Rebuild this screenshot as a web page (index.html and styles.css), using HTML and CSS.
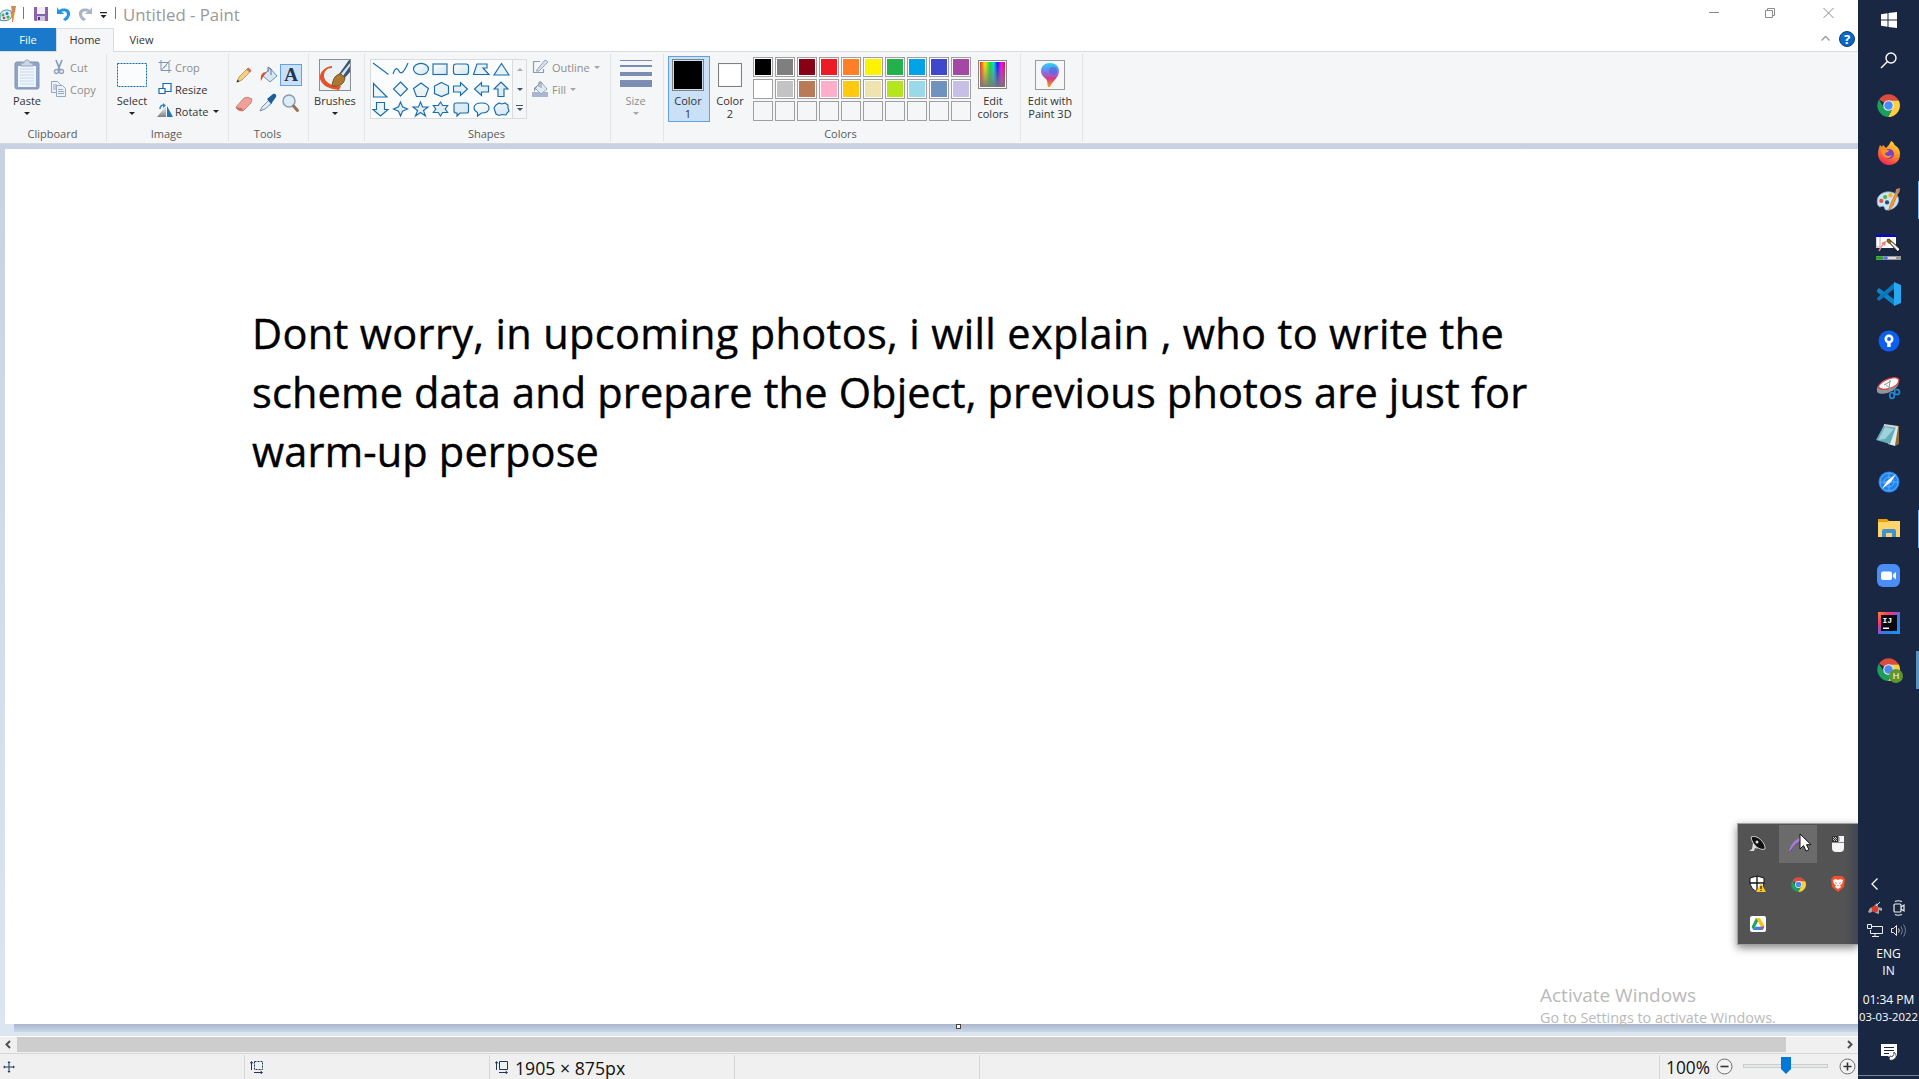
FILE: index.html
```html
<!DOCTYPE html>
<html lang="en">
<head>
<meta charset="utf-8">
<title>Untitled - Paint</title>
<link rel="stylesheet" href="styles.css">
</head>
<body>
<svg class="defs" width="0" height="0">
  <defs>
    <linearGradient id="pale" x1="0" y1="0" x2="1" y2="1"><stop offset="0" stop-color="#fff"/><stop offset="1" stop-color="#cfe6ee"/></linearGradient>
    <linearGradient id="rainbow"><stop offset="0" stop-color="#f22"/><stop offset=".2" stop-color="#fe0"/><stop offset=".4" stop-color="#1d3"/><stop offset=".55" stop-color="#0dd"/><stop offset=".7" stop-color="#11f"/><stop offset=".85" stop-color="#f0f"/><stop offset="1" stop-color="#f02"/></linearGradient>
    <linearGradient id="fade" x1="0" y1="0" x2="0" y2="1"><stop offset="0" stop-color="#888" stop-opacity="0"/><stop offset="1" stop-color="#777" stop-opacity=".95"/></linearGradient>
    <linearGradient id="balloon" x1="0" y1="0" x2="0" y2="1"><stop offset="0" stop-color="#1fd8ee"/><stop offset=".35" stop-color="#7a7cf2"/><stop offset=".65" stop-color="#d43a8c"/><stop offset="1" stop-color="#f9a20b"/></linearGradient>
    <linearGradient id="fox" x1=".8" y1="0" x2=".3" y2="1"><stop offset="0" stop-color="#ffe23a"/><stop offset=".5" stop-color="#ff8a22"/><stop offset="1" stop-color="#f5205e"/></linearGradient>
    <linearGradient id="idea" x1="0" y1="0" x2="1" y2="1"><stop offset="0" stop-color="#fc8a2a"/><stop offset=".3" stop-color="#f5317f"/><stop offset=".6" stop-color="#2c7bf0"/><stop offset="1" stop-color="#1497fb"/></linearGradient>
    <symbol id="chrome" viewBox="0 0 24 24">
      <path d="M12 12 2.200 5.700A12 12 0 0 1 22.800 6.800H12z" fill="#dd4b3e"/>
      <path d="M12 6.800h10.800A12 12 0 0 1 11.500 24l5-9.500z" fill="#fdcf41"/>
      <path d="M2 5.800 7.400 14.600 12 17.300h3.200L11.500 24A12 12 0 0 1 2 5.800z" fill="#1c9f5b"/>
      <circle cx="12" cy="12" r="5.500" fill="#f1f1f1"/><circle cx="12" cy="12" r="4.400" fill="#4a8af4"/>
    </symbol>
    <symbol id="palette" viewBox="0 0 26 26">
      <path d="M2 19C-1 11 5 5 13 5c8 0 12 6 10 11-2 6-8 8-12 8-3 0-1-4-4-4-2 0-3 2-5-1z" fill="#cfe4f2" stroke="#7eaec9" stroke-width=".8"/>
      <circle cx="5.500" cy="14.500" r="2.200" fill="#e25545"/><circle cx="9.500" cy="10.500" r="2.200" fill="#55b24a"/><circle cx="15" cy="8.500" r="2.300" fill="#f3b32b"/><circle cx="11.500" cy="16" r="2.200" fill="#1f4d75"/>
      <path d="M13 25 15 18 21 5l2 1-5 13z" fill="#f29a31" stroke="#c26a17" stroke-width=".6"/><path d="M20 6 21 2l4-1-.5 4-2 3z" fill="#b98c62"/>
    </symbol>
  </defs>
</svg>
<div class="desktop">
  <main class="window">
    <header class="titlebar">
      <svg class="app-icon" width="17" height="18" viewBox="0 0 17 18"><path d="M0 9C2 5 7 4 11 6l1 4c0 5-7 7-12 5z" fill="#d9edf5" stroke="#3a8fae"/><circle cx="3" cy="10" r="1.500" fill="#5a4"/><circle cx="7" cy="8.500" r="1.500" fill="#2b78c8"/><circle cx="4" cy="13" r="1.300" fill="#d44"/><circle cx="8" cy="12" r="1.500" fill="#4a4"/><path d="M12 6h3l-2 11h-1z" fill="#e88b2d"/><path d="M11 1h5l-1 6h-3z" fill="#c98a57"/></svg>
      <i class="tick"></i>
      <svg class="save" width="14" height="14" viewBox="0 0 14 14"><path d="M0 0h14v14H1L0 13z" fill="#8a63ae"/><path d="M3 0h8v7H3z" fill="#f1eef6"/><path d="M3 9h8v5H3z" fill="#cfc4de"/><path d="M4 10h2v3H4z" fill="#553480"/></svg>
      <svg class="undo" width="14" height="14" viewBox="0 0 14 14"><path d="M0 0v7h7L4.500 4.800C8 3 11 5 9.500 9L6 12.500 8.500 14C15 10 14.500 2 8 1.500 5 1.300 3 2 2 3z" fill="#2196e3"/></svg>
      <svg class="redo" width="14" height="14" viewBox="0 0 14 14"><path d="M14 0v7H7l2.500-2.200C6 3 3 5 4.500 9L8 12.500 5.500 14C-1 10-.5 2 6 1.500 9 1.300 11 2 12 3z" fill="#a9b4c6"/></svg>
      <svg class="qat" width="7" height="7" viewBox="0 0 7 7"><path d="M0 0h7v1.300H0zM.5 3h6L3.500 6.200z" fill="#222"/></svg>
      <i class="tick tick2"></i>
      <span class="title">Untitled - Paint</span>
      <svg class="winctl" width="126" height="12" viewBox="0 0 126 12" fill="none" stroke="#8b8b8b"><path d="M0 5.500h10M56.500 3.500h7v7h-7zM58.500 3.500v-2h7v7h-2M114.500 1l10 10M124.500 1l-10 10"/></svg>
    </header>
    <nav class="tabs">
      <span class="tab file">File</span><span class="tab home">Home</span><span class="tab view">View</span>
      <span class="help"><svg width="34" height="16" viewBox="0 0 34 16"><path d="M.5 9.500 4.500 5.500l4 4" fill="none" stroke="#999" stroke-width="1.300"/><circle cx="26" cy="8" r="7.500" fill="#0869c8" stroke="#12406c"/></svg><b>?</b></span>
    </nav>
    <section class="ribbon">
      <div class="group clipboard">
        <div class="tools-row">
          <div class="big paste"><svg width="26" height="32" viewBox="0 0 26 32"><rect x="1" y="3" width="24" height="27" rx="2" fill="#8ea3c5" stroke="#8294b5"/><path d="M4 7h18v21H4z" fill="#eff5fc"/><path d="M6 10h14M6 13h14M6 16h14M6 19h14M6 22h14M6 25h14" stroke="#cbd8e8"/><path d="M7 7V4h3c0-4 6-4 6 0h3v3z" fill="#ccd7e6" stroke="#93a4be"/></svg><span>Paste</span><i class="caret"></i></div>
          <div class="list dim">
            <p><svg width="16" height="16" viewBox="0 0 16 16" fill="none"><path d="M5 1l4 10M11 1 7 11" stroke="#8a9cbd" stroke-width="1.700"/><circle cx="5.500" cy="12.500" r="2" stroke="#94a3bd" stroke-width="1.400"/><circle cx="10.500" cy="12.500" r="2" stroke="#94a3bd" stroke-width="1.400"/></svg>Cut</p>
            <p><svg width="16" height="16" viewBox="0 0 16 16" fill="#eef2f9" stroke="#97a7c2"><path d="M.5.5h6l3 3v8h-9z"/><path d="M2 4h4M2 6h4M2 8h4"/><path d="M5.500 4.500h6l3 3v8h-9z"/><path d="M7 8.500h5M7 10.500h6M7 12.500h6"/></svg>Copy</p>
          </div>
        </div>
        <h2>Clipboard</h2>
      </div>
      <div class="group image">
        <div class="tools-row">
          <div class="big"><svg width="32" height="32" viewBox="0 0 32 32"><rect x="1.500" y="4.500" width="29" height="23" fill="#fafcfe" stroke="#1369ac" stroke-dasharray="2 1"/></svg><span>Select</span><i class="caret"></i></div>
          <div class="list">
            <p class="dim"><svg width="16" height="16" viewBox="0 0 16 16" fill="none" stroke="#8292ae"><path d="M3.500 1v10.500H14M1 3.500h10.500V14M4 11 13 1M6 9l3-3" /></svg>Crop</p>
            <p><svg width="16" height="16" viewBox="0 0 16 16" fill="#fff" stroke="#1c69a9"><path d="M5.500 2.500h8v8h-8z" stroke-width="1.200"/><path d="M1.500 7.500h6v5h-6z" stroke-width="1.200"/></svg>Resize</p>
            <p><svg width="17" height="16" viewBox="0 0 17 16"><path d="M9 3v11H0z" fill="url(#fade)"/><path d="M10 3v11h6z" fill="#1c7bb7"/><path d="M3 6c0-3 2-4 4-4" fill="none" stroke="#2a88d4" stroke-width="1.500"/><path d="M6 0l3 2.500L6 5z" fill="#2a88d4"/></svg>Rotate<i class="caret side"></i></p>
          </div>
        </div>
        <h2>Image</h2>
      </div>
      <div class="group tools">
        <div class="tool-grid">
          <svg viewBox="0 0 22 22"><path d="M4 18l2-5L15 4l3 3-9 9z" fill="#f3cf85" stroke="#a9823b" stroke-width=".7"/><path d="M13.500 5.500 15.500 3.500l3 3-2 2z" fill="#d66a60"/><path d="M3.500 18.500l1-3 2 2z" fill="#333"/></svg>
          <svg viewBox="0 0 22 22"><path d="M6 12 13 4l7 8-7 6z" fill="#d5e7f3" stroke="#6f91b1"/><path d="M11 8V3l3 2v6" fill="none" stroke="#5e7794"/><path d="M4 17c-1-6 1-9 6-9l-3 3z" fill="#e24b26"/></svg>
          <span class="letter">A</span>
          <svg viewBox="0 0 22 22"><path d="M3 15 11 6q4-2 8 1l-1 4-8 8q-4 0-6-2z" fill="#f1a098" stroke="#b96a62" stroke-width=".7"/><path d="M3 15q3 1 6 1l1 3q-4 0-6-2z" fill="#c96c65"/></svg>
          <svg viewBox="0 0 22 22"><path d="M3 19l2-4 7-7 3 3-7 6z" fill="#dcebf5" stroke="#7891a8"/><path d="M10 7l6-5c2-1 4 1 3 3l-5 7z" fill="#1d5d9b"/></svg>
          <svg viewBox="0 0 22 22"><circle cx="9" cy="9" r="6" fill="#dcecf8" stroke="#8d9cab" stroke-width="1.500"/><path d="M13.500 14l4 4.500" stroke="#986f58" stroke-width="3" stroke-linecap="round"/></svg>
        </div>
        <h2>Tools</h2>
      </div>
      <div class="group brushes">
        <div class="big"><svg width="32" height="32" viewBox="0 0 32 32"><rect x=".5" y=".5" width="31" height="31" fill="#eaf2f5" stroke="#8b8f93"/><path d="M13 7C5 8 0 14 1 20c2 6 8 9 13 10l6 1 2-4c-9 1-17-4-17-10 0-5 3-8 8-8z" fill="#e6512a"/><path d="M20 15 30 1h1v12l-7 8z" fill="#3c5574"/><path d="M22 15 31 4v3l-7 10z" fill="#d8e4ef"/><path d="M13 27c1-8 4-12 9-12l4 4c-1 6-5 9-13 8z" fill="#ab7733" stroke="#805220"/></svg><span>Brushes</span><i class="caret"></i></div>
      </div>
      <div class="group shapes">
        <div class="tools-row">
          <div class="gallery">
            <svg class="shape-set" width="142" height="58" viewBox="0 0 142 58" fill="url(#pale)" stroke="#1d6bab" stroke-width="1.150">
              <g fill="none"><path d="M3 3 18.500 14.500"/><path d="M23 14q3-9 6-3t9-8"/></g>
              <ellipse cx="51" cy="9" rx="7.500" ry="5.700"/><rect x="63" y="4" width="14" height="10.500"/><rect x="83.500" y="4" width="15" height="10.500" rx="2.500"/>
              <path d="M107 4h10v4h-4l6 6.500h-15.500zM131.500 3.500l7.500 11.500h-15zM3.500 23.500V37h13.500zM30.500 22l7 7-7 7-7-7zM51 23l7.500 5.500-3 8h-9l-3-8zM71.500 22.500l7 3.500v7.500l-7 3-7-3V26zM83.500 26h7v-3.500l7 6.500-7 6.500V32h-7zM118.500 26h-7v-3.500l-7 6.500 7 6.500V32h7zM128 36.500V29h-4l7-7 7 7h-4v7.500zM6.500 42.500h8v7h3.500l-7.500 6.500-7.500-6.500h3.500zM30.500 42l2 4.800 5 2.200-5 2.200-2 4.800-2-4.800-5-2.200 5-2.200zM50.500 42l2 5h5.500l-4.500 3.500 2 5.500-5-3.500-5 3.500 2-5.500-4.500-3.500h5.500zM70.500 42l2.200 3.500h5l-2.500 3.500 2.500 3.500h-5l-2.200 3.500-2.200-3.500h-5l2.500-3.500-2.500-3.500h5zM86 43h10.500q2 0 2 2v6q0 2-2 2H90l-3 3v-3h-1q-2 0-2-2v-6q0-2 2-2z"/>
              <path d="M111.500 43q7.500 0 7.500 5t-7.500 5l-4 3v-3.500q-3.500-2-3.500-4.500 0-5 7.500-5zM126 45l3-2 3 1 3-1 3 2v3l1 3-2 2-1 2-4-.5-3 1-3-1.500-1-3-1-3z"/>
            </svg>
            <div class="spin"><i class="up"></i><i class="caret"></i><i class="caret bar"></i></div>
          </div>
          <div class="list dim">
            <p><svg width="17" height="16" viewBox="0 0 17 16" fill="none"><path d="M8 2.500H1.500v11h10V10" stroke="#8a9bb8" stroke-width="1.200"/><path d="M4 12 13 1l3 2L7 12z" fill="#d9e0ec" stroke="#97a5be"/></svg>Outline<i class="caret side"></i></p>
            <p><svg width="17" height="16" viewBox="0 0 17 16"><path d="M0 11h16v5H0z" fill="#a8b7cf"/><path d="M3 7 9 1l6 7-6 5z" fill="#e3e9f1" stroke="#97a5be"/><path d="M7 6V1h2v6" fill="none" stroke="#8191aa"/><path d="M2 11V7l4-3z" fill="#8495b2"/></svg>Fill<i class="caret side"></i></p>
          </div>
        </div>
        <h2>Shapes</h2>
      </div>
      <div class="group size dim">
        <div class="big"><div class="weights"><i></i><i></i><i></i><i></i></div><span>Size</span><i class="caret"></i></div>
      </div>
      <div class="group colors">
        <div class="color-row">
          <div class="color-btn active"><i class="chip black"></i><span>Color<br>1</span></div>
          <div class="color-btn second"><i class="chip white"></i><span>Color<br>2</span></div>
          <div class="swatches">
            <i class="c0"></i><i class="c1"></i><i class="c2"></i><i class="c3"></i><i class="c4"></i><i class="c5"></i><i class="c6"></i><i class="c7"></i><i class="c8"></i><i class="c9"></i>
            <i class="d0"></i><i class="d1"></i><i class="d2"></i><i class="d3"></i><i class="d4"></i><i class="d5"></i><i class="d6"></i><i class="d7"></i><i class="d8"></i><i class="d9"></i>
            <i class="e"></i><i class="e"></i><i class="e"></i><i class="e"></i><i class="e"></i><i class="e"></i><i class="e"></i><i class="e"></i><i class="e"></i><i class="e"></i>
          </div>
          <div class="edit"><svg width="30" height="30" viewBox="0 0 30 30"><rect x=".5" y=".5" width="28" height="28" fill="#fff" stroke="#888"/><rect x="2" y="2" width="25" height="25" fill="url(#rainbow)"/><rect x="2" y="2" width="25" height="25" fill="url(#fade)"/></svg><span>Edit<br>colors</span></div>
        </div>
        <h2>Colors</h2>
      </div>
      <div class="group paint3d">
        <div class="edit"><svg width="30" height="30" viewBox="0 0 30 30"><rect x=".5" y=".5" width="29" height="29" fill="#f7f7f7" stroke="#9a9a9a"/><path d="M15 3c6 0 9 4 9 8 0 7-7 10-9 16h-2c-1-4 0-5-2-8-2-2-5-4-5-8 0-5 4-8 9-8z" fill="url(#balloon)"/><circle cx="18" cy="11" r="4" fill="#5263dc" opacity=".6"/></svg><span>Edit with<br>Paint 3D</span></div>
      </div>
    </section>
    <section class="workspace">
      <div class="canvas"><p class="t1">Dont worry, in upcoming photos, i will explain , who to write the</p><p class="t2">scheme data and prepare the Object, previous photos are just for</p><p class="t3">warm-up perpose</p></div>
      <div class="shadow"><i class="handle"></i></div>
    </section>
    <div class="scrollbar"><svg width="17" height="15" viewBox="0 0 17 15"><path d="M10 4 6.500 7.500 10 11" fill="none" stroke="#505050" stroke-width="2"/></svg><i class="thumb"></i><svg width="17" height="15" viewBox="0 0 17 15"><path d="M7 4l3.500 3.500L7 11" fill="none" stroke="#505050" stroke-width="2"/></svg></div>
    <footer class="status">
      <div class="cell first"><svg width="12" height="12" viewBox="0 0 12 12" stroke="#1e395b" fill="#1e395b"><path d="M6 1v10M1 6h10" /><path d="M6 0l1.500 2h-3zM6 12l1.500-2h-3zM0 6l2-1.500v3zM12 6l-2-1.500v3z" stroke="none"/></svg></div>
      <div class="cell"><svg width="14" height="14" viewBox="0 0 14 14" fill="none" stroke="#1e395b"><path d="M1.500 2v8M0 3.500l1.500-2 1.500 2M4 12.500h8M10.500 11l2 1.500-2 1.500"/><path d="M4.500 1.500h8v8h-8z" stroke-dasharray="2 1"/></svg></div>
      <div class="cell"><svg width="14" height="14" viewBox="0 0 14 14" fill="none" stroke="#1e395b"><path d="M1.500 2v8M0 3.500l1.500-2 1.500 2M4 12.500h8M10.500 11l2 1.500-2 1.500M4.500 1.500h8v8h-8z"/></svg><span class="dims">1905 × 875px</span></div>
      <div class="cell"></div>
      <div class="cell wide"></div>
      <div class="zoom"><span>100%</span>
        <svg width="17" height="17" viewBox="0 0 17 17"><circle cx="8.500" cy="8.500" r="7.500" fill="#f3f3f3" stroke="#6e6e6e"/><path d="M4.500 8.500h8" stroke="#333" stroke-width="1.600"/></svg>
        <div class="track"><svg width="10" height="17" viewBox="0 0 10 17"><path d="M0 0h10v12l-5 5-5-5z" fill="#0078d7"/></svg></div>
        <svg width="17" height="17" viewBox="0 0 17 17"><circle cx="8.500" cy="8.500" r="7.500" fill="#f3f3f3" stroke="#6e6e6e"/><path d="M4.500 8.500h8M8.500 4.500v8" stroke="#333" stroke-width="1.600"/></svg>
      </div>
    </footer>
    <div class="watermark"><b>Activate Windows</b><span>Go to Settings to activate Windows.</span></div>
    <aside class="tray-popup">
      <span><svg width="18" height="18" viewBox="0 0 18 18"><path d="M2 2C8-1 17 8 16 14c-5 2-13-4-14-12z" fill="#111" stroke="#ccc"/><path d="M4 8 9 14 6 13 5 16H0l3-2z" fill="#ddd"/><circle cx="8" cy="7" r="1.500" fill="#ddd"/></svg></span>
      <span class="hover"><svg width="18" height="18" viewBox="0 0 18 18"><path d="M0 16C2 8 8 3 15 1l-3 5-5 3-4 6z" fill="#a77bd0"/><path d="M2 16C5 10 9 7 16 5" stroke="#63428c" fill="none"/></svg></span>
      <span><svg width="16" height="18" viewBox="0 0 16 18"><path d="M2 1h12v12q0 4-4 4H6q-4 0-4-4z" fill="#f5f5f5"/><path d="M2 1h6v6H2z" fill="#333"/><path d="M3 2h1v1H3zM5 2h1v1H5zM4 3h1v1H4zM6 3h1v1H6zM3 4h1v1H3zM5 4h1v1H5zM4 5h1v1H4zM6 5h1v1H6zM9 2h1v4H9z" fill="#bbb"/><path d="M2 7.500h12M8.500 1v6" stroke="#888" fill="none"/></svg></span>
      <span><svg width="18" height="18" viewBox="0 0 18 18"><path d="M8 1l7 2v6q-1 5-7 8-6-3-7-8V3z" fill="#fff" stroke="#111"/><path d="M8 1v16M1 8h14" stroke="#111" stroke-width="1.300"/><path d="M12 8l5 9H7z" fill="#ffc421"/><path d="M12 11v3M12 15v1" stroke="#222" stroke-width="1.300"/></svg></span>
      <span><svg width="15" height="15"><use href="#chrome"/></svg></span>
      <span><svg width="14" height="16" viewBox="0 0 14 16"><path d="M3 0h8l3 3-1 8-6 5-6-5L0 3z" fill="#f3502b"/><path d="M2 4l3-1 2 1 2-1 3 1-1 4-2 1 1 2-3 2-3-2 1-2-2-1z" fill="#fff"/><path d="M4 6l2 1-1 1zM10 6 8 7l1 1zM6 9h2l-1 1z" fill="#f3502b"/></svg></span>
      <span><svg width="16" height="16" viewBox="0 0 16 16"><rect width="16" height="16" rx="2" fill="#fff"/><path d="M6 2h4L5 11l-1.500 3L1.500 11z" fill="#1fa463"/><path d="M6 2h4l4.500 8h-4z" fill="#fbc016"/><path d="M5 10.500h9.500l-2 3.500h-9z" fill="#3f7fea"/><path d="M11 10.500h3.500l-2 3.500z" fill="#e8453a"/><path d="M8 6l2.500 4.500h-5z" fill="#fff"/></svg></span>
    </aside>
    <svg class="cursor" width="14" height="20" viewBox="0 0 14 20"><path d="M1 1v15l3.500-3.500L7 18l3-1.300-2.500-5H12z" fill="#fff" stroke="#111"/></svg>
  </main>
  <aside class="taskbar">
    <div class="slot top"><svg width="16" height="16" viewBox="0 0 16 16"><path d="M0 2.300 6.500 1.300V7.500H0zM7.500 1.100 16 0v7.500H7.500zM0 8.500h6.500v6.200L0 13.700zM7.500 8.500H16V16l-8.500-1.100z" fill="#fff"/></svg></div>
    <div class="slot top"><svg width="17" height="17" viewBox="0 0 17 17" fill="none" stroke="#fff" stroke-width="1.400"><circle cx="11" cy="6" r="5"/><path d="M7.500 9.500 1 16"/></svg></div>
    <div class="apps">
      <div class="slot"><svg width="23" height="23"><use href="#chrome"/></svg></div>
      <div class="slot"><svg width="24" height="24" viewBox="0 0 24 24"><path d="M1 13C1 9 2 7 3 4l2 2 1-2 3 3c2-2 4-4 5-7 2 1 3 2 3.500 4L19 5c3 2 4 5 4 8 0 7-5 11-11 11S1 19 1 13z" fill="url(#fox)"/><circle cx="12" cy="13" r="5" fill="#7542c8"/><path d="M4 9h8l-1 2-3 1c0 3 3 4 7 2-2 5-10 4-11-5z" fill="#ff922a"/></svg></div>
      <div class="slot open"><svg width="25" height="25"><use href="#palette"/></svg></div>
      <div class="slot"><svg width="25" height="26" viewBox="0 0 25 26"><path d="M0 1h20v13H0z" fill="#fff"/><path d="M0 1h20v2H0z" fill="#00e"/><path d="M0 3v10h4V3" fill="none" stroke="#aaa"/><path d="M3 17 8 8" stroke="#f88" stroke-width="1.500"/><path d="M5 9l5-2-1 5z" fill="#f77"/><path d="M11 6l2-1 11 10-2 3z" fill="#eee" stroke="#111"/><path d="M10 7l3-2 3 3-3 2z" fill="#8a6419"/><path d="M0 22h25v4H0z" fill="#999"/><path d="M0 22.500h7v3H0z" fill="#1fa51f"/><path d="M8 22.500h3v3H8z" fill="#66e"/><path d="M12 23h8v2h-8z" fill="#ddd"/></svg></div>
      <div class="slot"><svg width="24" height="24" viewBox="0 0 24 24"><path d="M0 8l2-2 16 12v6L0 10z" fill="#0c83c9"/><path d="M0 16 18 0v6L2 19l-2-2z" fill="#0a77bb"/><path d="M17 0l7 3v18l-7 3z" fill="#29a8f2"/></svg></div>
      <div class="slot"><svg width="22" height="22" viewBox="0 0 22 22"><circle cx="11" cy="11" r="10.500" fill="#0d5ff0"/><circle cx="11" cy="9" r="3.200" fill="none" stroke="#fff" stroke-width="2.600"/><path d="M9.200 12h3.500v5H9.200z" fill="#fff"/></svg></div>
      <div class="slot"><svg width="25" height="24" viewBox="0 0 25 24"><path d="M1 12c4-8 20-12 22-6-1 9-17 15-22 10z" fill="#8f969b"/><path d="M2 11C6 3 21-1 23 4 22 12 6 16 2 11z" fill="#fff" stroke="#d34242" stroke-width="1.300"/><path d="M9 8l7 6M14 4l-1 9M8 9l7-4" stroke="#999"/><g fill="none" stroke="#2189d2" stroke-width="1.700"><circle cx="21" cy="16" r="2.500"/><ellipse cx="16" cy="19.500" rx="2.200" ry="3"/></g></svg></div>
      <div class="slot"><svg width="25" height="24" viewBox="0 0 25 24"><path d="M21 3h2v18l-4 2z" fill="#8d6b35"/><path d="M9 2l13 2-3 19-7-2z" fill="#dfeceb"/><path d="M8 2l12 2-6 17L0 17z" fill="#62adb8"/><path d="M9 4l9 2-9 10-7 1z" fill="#9ed2d8"/><path d="M8 2l14 2" stroke="#d5d5d5" stroke-width="2"/></svg></div>
      <div class="slot"><svg width="22" height="22" viewBox="0 0 22 22"><circle cx="11" cy="11" r="10.500" fill="#2084ef"/><g fill="none" stroke="#7ab9f7" stroke-width=".7"><circle cx="11" cy="11" r="9"/><circle cx="11" cy="11" r="5"/><path d="M11 2v18M2 11h18"/></g><path d="M4 18l5-8 9-7-5 8z" fill="#fff"/></svg></div>
      <div class="slot open"><svg width="22" height="19" viewBox="0 0 22 19"><path d="M0 0h9l2 2h11v16H0z" fill="#e8a203"/><path d="M0 3h9l2-1h11v16H0z" fill="#ffd469"/><path d="M4 18v-6q0-2 2-2h10q2 0 2 2v6h-4v-4H8v4z" fill="#3d91d6"/></svg></div>
      <div class="slot"><svg width="23" height="23" viewBox="0 0 23 23"><rect width="23" height="23" rx="6" fill="#4a8df7"/><rect x="4" y="7.500" width="11" height="8.500" rx="2" fill="#fff"/><path d="M16 10.500 19 8v7.500l-3-2.500z" fill="#fff"/></svg></div>
      <div class="slot"><div class="idea"><svg width="22" height="22" viewBox="0 0 22 22"><path d="M0 0h22v22H0z" fill="url(#idea)"/><path d="M3 3h16v16H3z" fill="#0a0610"/><path d="M5 15.500h6V17H5z" fill="#fff"/></svg><b>IJ</b></div></div>
      <div class="slot current"><div class="profile"><svg width="23" height="23"><use href="#chrome"/></svg><b>H</b></div></div>
    </div>
    <div class="tray">
      <svg width="7" height="12" viewBox="0 0 7 12"><path d="M6.500.5 1 6l5.500 5.500" fill="none" stroke="#fff" stroke-width="1.300"/></svg>
      <div class="pair"><svg width="15" height="14" viewBox="0 0 15 14"><path d="M0 11l2-4 3-1 4-4 1 4 4 1v3l-3-1 0 4-3-1-3-2-3 2z" fill="#a9a9a9"/><circle cx="7" cy="8" r="3.200" fill="#d83b2a"/><path d="M8 5l4-4" stroke="#ddd"/></svg><svg width="12" height="16" viewBox="0 0 12 16" fill="none" stroke="#eee" stroke-width="1.200"><rect x="1" y="4" width="7" height="8" rx="1"/><path d="M8 7l3-2v6L8 9M2 1.500q3-1.500 7 0M2 14.500q3 1.500 7 0"/></svg></div>
      <div class="pair"><svg width="16" height="14" viewBox="0 0 16 14" fill="none" stroke="#eee"><path d="M5 2.500h10.500v7H3.500V6M8 10v3M5 12.500h7"/><path d="M.5.500h4v4h-4z"/></svg><svg width="16" height="13" viewBox="0 0 16 13" fill="none" stroke="#eee"><path d="M.5 4.500h2l3-3v10l-3-3h-2z"/><path d="M7.500 4.500q1.500 2 0 4"/><path d="M10 2.500q3 4 0 8M12.500.5q4 6 0 12" stroke="#76829a"/></svg></div>
      <p class="lang">ENG<br>IN</p>
      <p class="clock"><span class="time">01:34 PM</span><br><span class="date">03-03-2022</span></p>
      <svg class="notes" width="17" height="17" viewBox="0 0 17 17"><path d="M0 0h16v12h-5v4l-4-4H0z" fill="#fff"/><path d="M3 3.500h10M3 6.500h10M3 9.500h5" stroke="#1a2742"/><path d="M9 12q4 2 4-4 5 5-1 8-3 1-4-1z" fill="#fff" stroke="#1a2742" stroke-width=".8"/></svg>
    </div>
    <i class="show-desktop"></i>
  </aside>
</div>
</body>
</html>
```

FILE: styles.css
```css
* { box-sizing: border-box; }
body, p, h2 { margin: 0; }
body { width: 1919px; height: 1079px; overflow: hidden; font-family: "Open Sans", "Noto Sans", sans-serif; font-size: 11px; color: #333; }
svg { display: block; flex: none; }
i { display: block; font-style: normal; }
.defs { position: absolute; }
.desktop { display: flex; width: 1919px; height: 1079px; }
.window { position: relative; width: 1858px; height: 1079px; display: flex; flex-direction: column; overflow: hidden; background: #fff; }

.titlebar { height: 28px; display: flex; align-items: center; flex: none; }
.app-icon { margin: -1px -1px 0 0; }
.tick { width: 1px; height: 12px; background: #777; margin: -2px 0 0 7px; }
.save { margin-left: 10px; }
.undo { margin-left: 9px; }
.redo { margin-left: 7px; }
.qat { margin: 3px 0 0 8px; }
.tick2 { margin-left: 8px; }
.title { margin-left: 7px; font-size: 16.800px; line-height: 28px; padding-top: 1px; color: #999; white-space: nowrap; }
.winctl { margin: -2px 23px 0 auto; }

.tabs { height: 23px; display: flex; flex: none; line-height: 23px; }
.tab { text-align: center; }
.file { width: 56px; background: #1979ca; color: #fff; }
.home { width: 58px; height: 24px; background: #f5f6f7; border: 1px solid #dadbdc; border-bottom: 0; line-height: 22px; z-index: 1; }
.view { width: 55px; }
.help { margin: 3px 3px 0 auto; display: grid; }
.help > * { grid-area: 1 / 1; }
.help b { justify-self: end; width: 16px; text-align: center; font-size: 13px; line-height: 16px; color: #fff; }

.ribbon { height: 93px; flex: none; display: flex; background: #f5f6f7; border-top: 1px solid #dadbdc; border-bottom: 1px solid #d4d7dc; padding: 2px 0 3px; line-height: 13px; }
.group { display: flex; flex-direction: column; border-right: 1px solid #e2e3e4; height: 87px; padding-top: 5px; flex: none; }
.group h2 { font-size: 11px; font-weight: 400; line-height: 14px; text-align: center; color: #5a5a5a; margin-top: auto; }
.tools-row { display: flex; }
.big { display: flex; flex-direction: column; align-items: center; }
.big span { margin-top: 3px; }
.caret { width: 0; height: 0; border: 3px solid transparent; border-top-color: #222; border-bottom: 0; }
.big .caret { margin-top: 5px; }
.list { display: flex; flex-direction: column; margin-top: -2px; }
.list p { display: flex; align-items: center; height: 22px; margin-top: -1px; margin-bottom: 1px; white-space: nowrap; }
.list svg { margin-right: 3px; }
.caret.side { margin-left: 4px; }
.dim { color: #8d8d8d; }
.dim .caret { border-top-color: #a5a5a5; }
.clipboard { width: 107px; }
.clipboard .big { width: 42px; margin-left: 6px; }
.clipboard .list { margin-left: 3px; }
.clipboard h2 { padding-right: 1px; }
.image { width: 122px; }
.image .big { width: 38px; margin-left: 6px; }
.image .list { margin-left: 6px; }
.image .list svg { width: 17px; margin-right: 1px; }
.image h2 { padding-right: 2px; }
.tools { width: 80px; }
.tools h2 { padding-right: 2px; }
.tool-grid { display: grid; grid-template-columns: 22px 22px 22px; gap: 6px 1.500px; padding: 5px 0 0 4px; }
.tool-grid svg { width: 22px; height: 22px; }
.letter { border: 1px solid #62a2e4; background: #c9e0f7; font: bold 19px/20px "Liberation Serif", serif; text-align: center; color: #1e3350; }
.brushes { width: 56px; }
.brushes .big { margin-right: 3px; }
.shapes { width: 246px; }
.shapes h2 { padding-right: 2px; }
.gallery { display: flex; width: 157px; height: 60px; margin-left: 5px; border: 1px solid #dadbdc; background: #fafcfe; }
.shape-set { margin-left: -1px; }
.spin { width: 14px; margin-left: auto; border-left: 1px solid #dadbdc; display: flex; flex-direction: column; align-items: center; background: #f5f6f7; }
.spin .up { border: 3px solid transparent; border-bottom-color: #aaa; border-top: 0; margin: 8px 0 17px; }
.spin .caret { border-top-color: #44546a; }
.spin .bar { margin-top: 17px; position: relative; }
.bar::before { content: ""; position: absolute; left: -4px; top: -6px; width: 7px; height: 1px; background: #44546a; }
.shapes .list { margin-left: 5px; }
.shapes .list svg { margin-right: 3px; }
.size { width: 53px; }
.size .big { margin-right: 3px; }
.weights { width: 32px; height: 32px; padding-top: 1px; }
.weights i { background: #7b8db0; height: 1px; margin-bottom: 4px; }
.weights i:nth-child(2) { height: 2px; margin-bottom: 5px; }
.weights i:nth-child(3) { height: 4px; }
.weights i:nth-child(4) { height: 7px; }
.colors { width: 357px; padding-top: 2px; }
.colors h2 { padding-right: 3px; }
.color-row { display: flex; }
.color-btn { width: 42px; height: 66px; margin-left: 4px; padding-top: 3px; display: flex; flex-direction: column; align-items: center; text-align: center; }
.color-btn.active { border: 1px solid #62a2e4; background: #c9e0f7; padding: 2px 2px 0 0; }
.color-btn.second { margin-left: 0; padding: 7px 2px 0 0; }
.chip { width: 32px; height: 32px; border: 1px solid #808080; padding: 1px; background-clip: content-box; }
.black { background-color: #000; }
.white { width: 24px; height: 24px; background-color: #fff; }
.color-btn span { margin-top: 3px; }
.second span { margin-top: 7px; }
.swatches { display: grid; grid-template-columns: repeat(10, 20px); grid-auto-rows: 20px; gap: 2px; margin: 1px 0 0 1px; }
.swatches i { border: 1px solid #a0a0a0; padding: 1px; box-shadow: inset 0 0 0 1px #fff; background-clip: content-box; }
.swatches .e { box-shadow: none; }
.c0 { background-color: #000; } .c1 { background-color: #7f7f7f; } .c2 { background-color: #880015; } .c3 { background-color: #ed1c24; } .c4 { background-color: #ff7f27; }
.c5 { background-color: #fff200; } .c6 { background-color: #22b14c; } .c7 { background-color: #00a2e8; } .c8 { background-color: #3f48cc; } .c9 { background-color: #a349a4; }
.d0 { background-color: #fff; } .d1 { background-color: #c3c3c3; } .d2 { background-color: #b97a57; } .d3 { background-color: #ffaec9; } .d4 { background-color: #ffc90e; }
.d5 { background-color: #efe4b0; } .d6 { background-color: #b5e61d; } .d7 { background-color: #99d9ea; } .d8 { background-color: #7092be; } .d9 { background-color: #c8bfe7; }
.edit { display: flex; flex-direction: column; align-items: center; text-align: center; }
.edit span { margin-top: 4px; white-space: nowrap; }
.colors .edit { width: 40px; margin: 4px 0 0 2px; }
.paint3d { width: 62px; padding-top: 6px; }
.paint3d .edit { margin-right: 3px; }

.workspace { height: 892px; flex: none; padding: 5px 0 0 5px; background: linear-gradient(#c8d1e2, #dce6f1); }
.canvas { height: 875px; padding: 155px 0 0 247px; background: #fff; color: #000; font-size: 41.500px; line-height: 59px; white-space: pre; -webkit-text-stroke: .4px #000; }
.t1 { letter-spacing: .340px; }
.t2, .t3 { letter-spacing: .160px; }
.shadow { height: 8px; margin-left: 9px; background: linear-gradient(#a9b6cd, #ccd7e7); position: relative; }
.handle { position: absolute; left: 942px; top: 0; width: 5px; height: 5px; background: #fff; border: 1px solid #444; }

.scrollbar { height: 17px; flex: none; display: flex; background: #f0f0f0; border-top: 1px solid #fff; border-bottom: 1px solid #f0f0f0; }
.thumb { width: 1769px; height: 15px; background: #cdcdcd; margin-right: auto; }
.status { height: 26px; display: flex; background: #f0f0f0; border-top: 1px solid #d7d7d7; padding-top: 1px; }
.cell { width: 245px; height: 24px; flex: none; border-right: 1px solid #d7d7d7; display: flex; align-items: center; padding-left: 5px; }
.first { padding-left: 3px; }
.wide { width: 680px; }
.dims { margin: 1px 0 0 6px; font-size: 17.700px; line-height: 22px; color: #111; white-space: nowrap; }
.zoom { display: flex; align-items: center; flex: none; padding-left: 6px; }
.zoom > span { width: 44px; margin-top: 2px; font-size: 17.300px; line-height: 22px; color: #111; }
.zoom > svg { margin: -1px 5px 0 6px; }
.track { width: 85px; height: 4px; border: 1px solid #ccc; background: #e7eaea; margin: -3px 5px 0; display: flex; align-items: center; justify-content: center; }

.watermark { position: absolute; left: 1540px; top: 983px; color: #b9b9b9; white-space: nowrap; }
.watermark b, .watermark span { display: block; font-weight: 400; font-size: 19px; line-height: 25px; }
.watermark span { font-size: 14.400px; line-height: 20px; }
.tray-popup { position: absolute; left: 1737px; top: 823px; width: 121px; height: 122px; border: 1px solid #a0a0a0; border-right: 0; background: linear-gradient(90deg, #535353 90%, #414650); box-shadow: 0 3px 8px #0007; display: grid; grid-template-columns: repeat(3, 40px); grid-auto-rows: 40px; }
.tray-popup span { display: grid; place-items: center; margin: 1px; }
.hover { background: #6b6b6b; }
.cursor { position: absolute; left: 1799px; top: 833px; }

.taskbar { width: 61px; display: flex; flex-direction: column; background: #1a2742; color: #fff; }
.slot { height: 47px; display: grid; place-items: center; }
.slot.top { height: 40px; }
.apps { padding-top: 2px; }
.open { background: linear-gradient(#76b9ed, #76b9ed) 100% 50% / 1px 38px no-repeat; }
.current { background: linear-gradient(#5b93c0, #5b93c0) 100% 50% / 3px 38px no-repeat; }
.idea, .profile { display: grid; }
.idea > *, .profile > * { grid-area: 1 / 1; }
.idea b { font: bold 8px/9px "Liberation Mono", monospace; margin: 4px 0 0 5px; }
.profile b { width: 14px; height: 14px; border-radius: 50%; background: #5d9535; font: 9px/14px "Liberation Sans", sans-serif; text-align: center; margin: 11px -3px -2px 12px; }
.tray { margin-top: auto; height: 183px; display: flex; flex-direction: column; font-size: 12px; line-height: 17px; text-align: center; }
.tray > svg:first-child { margin: 0 0 9px 13px; }
.pair { height: 24px; display: grid; grid-template-columns: 24px 24px; justify-content: center; place-items: center; margin-right: 3px; margin-top: -2px; margin-bottom: 2px; }
.lang { margin-top: 1px; }
.clock { margin-top: 12px; white-space: nowrap; }
.date { font-size: 11.300px; }
.notes { margin: 19px 0 0 23px; }
.show-desktop { height: 1px; background: #7c8596; margin: 14px 0 3px; flex: none; }
```
